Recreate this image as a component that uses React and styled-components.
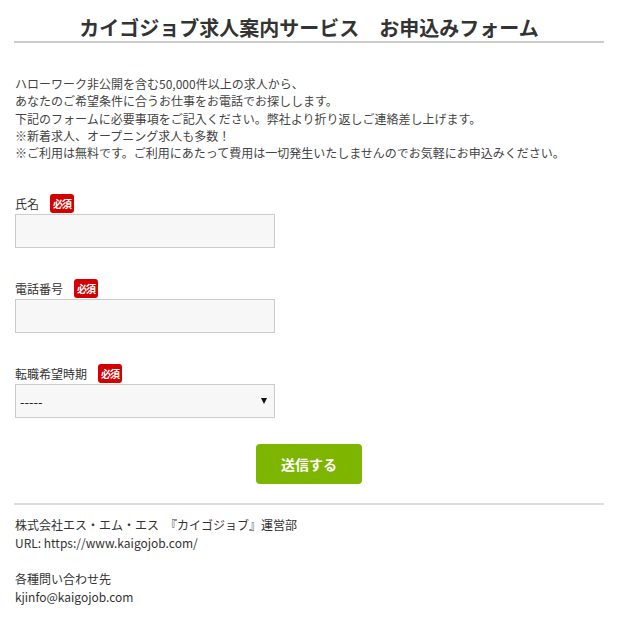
import React from "react";
import styled, { createGlobalStyle } from "styled-components";

const GlobalStyle = createGlobalStyle`
  body {
    margin: 0;
    background: #fff;
    font-family: "Noto Sans CJK JP", "Noto Sans", sans-serif;
    color: #333;
  }
`;

const Page = styled.div`
  width: 590px;
  margin-left: 14px;
`;

const Header = styled.h1`
  margin: 0;
  padding: 16px 0 1px;
  font-size: 20px;
  line-height: 24px;
  font-weight: bold;
  text-align: center;
  color: #333;
  border-bottom: 2px solid #ccc;
`;

const Intro = styled.p`
  margin: 32px 0 0;
  padding-left: 1px;
  font-size: 12px;
  line-height: 17.3px;
  color: #444;
`;

const Form = styled.form`
  margin-top: 33px;
  padding-left: 1px;
  display: flex;
  flex-direction: column;
  gap: 31px;
`;

const Field = styled.div`
  display: flex;
  flex-direction: column;
  gap: 1px;
`;

const Label = styled.label`
  display: flex;
  align-items: center;
  height: 19px;
  font-size: 12px;
  color: #333;
`;

const Required = styled.span`
  display: inline-flex;
  align-items: center;
  justify-content: center;
  flex: none;
  margin-left: 11px;
  width: 24px;
  height: 19px;
  border-radius: 3px;
  background: #d40000;
  color: #fff;
  font-size: 10px;
  font-weight: bold;
  letter-spacing: -1px;
`;

const Input = styled.input`
  box-sizing: border-box;
  width: 260px;
  height: 34px;
  border: 1px solid #ccc;
  background: #f7f7f7;
  padding: 0 5px;
  font-size: 12px;
  outline: none;
`;

const SelectWrap = styled.div`
  position: relative;
  width: 260px;
`;

const Select = styled.select`
  box-sizing: border-box;
  width: 260px;
  height: 34px;
  border: 1px solid #ccc;
  border-radius: 0;
  background: #f7f7f7;
  padding: 0 4px;
  font-size: 13px;
  font-family: "Noto Sans CJK JP", sans-serif;
  color: #222;
  appearance: none;
  outline: none;
`;

const Arrow = styled.span`
  position: absolute;
  right: 8px;
  top: 14px;
  width: 0;
  height: 0;
  border-left: 3.5px solid transparent;
  border-right: 3.5px solid transparent;
  border-top: 6px solid #111;
  pointer-events: none;
`;

const Submit = styled.button`
  display: block;
  margin: 26px auto 0;
  width: 106px;
  height: 40px;
  border: none;
  border-radius: 4px;
  background: #7db500;
  color: #fff;
  font-family: "Noto Sans CJK JP", sans-serif;
  font-size: 14px;
  font-weight: bold;
  cursor: pointer;
`;

const Footer = styled.footer`
  margin-top: 19px;
  border-top: 2px solid #ddd;
  padding: 11px 0 0 1px;
  font-size: 12px;
  line-height: 18px;
  color: #333;
`;

const Para = styled.p`
  margin: 0 0 18px;
`;

const fields = [
  { id: "name", label: "氏名" },
  { id: "tel", label: "電話番号" },
];

export default function App() {
  return (
    <>
      <GlobalStyle />
      <Page>
        <Header>カイゴジョブ求人案内サービス　お申込みフォーム</Header>
        <Intro>
          ハローワーク非公開を含む50,000件以上の求人から、
          <br />
          あなたのご希望条件に合うお仕事をお電話でお探しします。
          <br />
          下記のフォームに必要事項をご記入ください。弊社より折り返しご連絡差し上げます。
          <br />
          ※新着求人、オープニング求人も多数！
          <br />
          ※ご利用は無料です。ご利用にあたって費用は一切発生いたしませんのでお気軽にお申込みください。
        </Intro>
        <Form onSubmit={(e) => e.preventDefault()}>
          {fields.map((f) => (
            <Field key={f.id}>
              <Label htmlFor={f.id}>
                {f.label}
                <Required>必須</Required>
              </Label>
              <Input id={f.id} type="text" />
            </Field>
          ))}
          <Field>
            <Label htmlFor="period">
              転職希望時期
              <Required>必須</Required>
            </Label>
            <SelectWrap>
              <Select id="period" defaultValue="">
                <option value="">-----</option>
              </Select>
              <Arrow />
            </SelectWrap>
          </Field>
        </Form>
        <Submit type="button">送信する</Submit>
        <Footer>
          <Para>
            株式会社エス・エム・エス　『カイゴジョブ』運営部
            <br />
            URL: https://www.kaigojob.com/
          </Para>
          <Para>
            各種問い合わせ先
            <br />
            kjinfo@kaigojob.com
          </Para>
        </Footer>
      </Page>
    </>
  );
}
